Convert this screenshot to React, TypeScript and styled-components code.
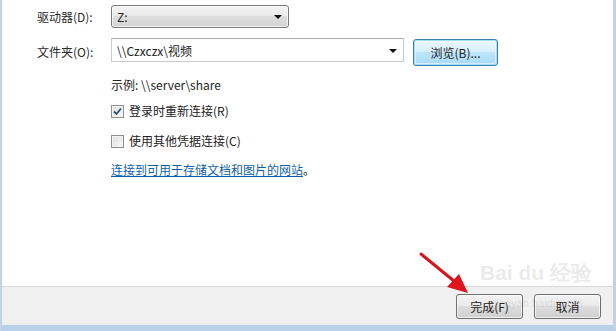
import React from "react";
import styled, { createGlobalStyle } from "styled-components";

const Global = createGlobalStyle`
  html, body { margin: 0; padding: 0; background: #fff; }
  body { font-family: "Noto Sans CJK SC", "Microsoft YaHei", "Noto Sans", sans-serif; }
`;

const Window = styled.div`
  position: relative;
  width: 616px;
  height: 331px;
  box-sizing: border-box;
  display: flex;
  flex-direction: column;
  border-left: 2px solid #c3d3e4;
  border-right: 3px solid #c2d2e2;
  overflow: hidden;
  font-size: 12px;
  color: #222;
`;

const Content = styled.div`
  flex: 1;
  background: #fff;
  padding: 5px 0 0 35px;
  display: flex;
  flex-direction: column;
`;

const Row = styled.div<{ $mt?: number; $top?: boolean }>`
  display: flex;
  align-items: ${(p) => (p.$top ? "flex-start" : "center")};
  margin-top: ${(p) => p.$mt ?? 0}px;
`;

const Label = styled.div<{ $lh?: number }>`
  width: 74px;
  line-height: ${(p) => p.$lh ?? 16}px;
  color: #2a2a2a;
`;

const Select = styled.div`
  box-sizing: border-box;
  width: 178px;
  height: 23px;
  border: 1px solid #7a7a7a;
  border-radius: 3px;
  background: linear-gradient(#f4f4f4 0%, #ebebeb 45%, #dddddd 50%, #d4d4d4 100%);
  display: flex;
  align-items: center;
  justify-content: space-between;
  padding: 0 6px 0 5px;
  box-shadow: inset 0 0 0 1px rgba(255,255,255,0.7);
`;

const Combo = styled.div`
  box-sizing: border-box;
  width: 293px;
  height: 24px;
  border: 1px solid #c8cbd0;
  border-top-color: #a9acb1;
  background: #fff;
  display: flex;
  align-items: center;
  justify-content: space-between;
  padding: 0 6px 0 5px;
`;

const Arrow = styled.span`
  width: 0;
  height: 0;
  border-left: 4px solid transparent;
  border-right: 4px solid transparent;
  border-top: 4px solid #111;
  margin-top: 1px;
`;

const BrowseButton = styled.div`
  box-sizing: border-box;
  margin-left: 9px;
  margin-top: 1px;
  width: 85px;
  height: 27px;
  border: 1px solid #3c7fb1;
  border-radius: 3px;
  background: linear-gradient(#eaf6fd 0%, #d9f0fc 45%, #bee6fd 50%, #a7d9f5 100%);
  box-shadow: inset 0 0 0 1px #9ee0f5, inset 0 0 0 2px rgba(255,255,255,0.5);
  display: flex;
  align-items: center;
  justify-content: center;
  color: #222;
`;

const Indented = styled.div<{ $mt: number }>`
  margin-left: 74px;
  margin-top: ${(p) => p.$mt}px;
  line-height: 16px;
  display: flex;
  align-items: center;
`;

const Box = styled.span`
  box-sizing: border-box;
  width: 13px;
  height: 13px;
  border: 1px solid #8e8f8f;
  background: linear-gradient(135deg, #dcdcdc, #fbfbfb);
  box-shadow: inset 0 0 0 1px #f4f4f4;
  margin-right: 5px;
  display: flex;
  align-items: center;
  justify-content: center;
`;

const Link = styled.span`
  color: #0f5fa8;
  text-decoration: underline;
`;

const Footer = styled.div`
  height: 39px;
  box-sizing: border-box;
  background: #f0f0f0;
  border-top: 1px solid #d8d8d8;
  border-bottom: 1px solid #e8eef5;
  display: flex;
  align-items: flex-start;
  justify-content: flex-end;
  gap: 11px;
  padding: 7px 12px 0 0;
`;

const Button = styled.div`
  box-sizing: border-box;
  width: 67px;
  height: 25px;
  border: 1px solid #707070;
  border-radius: 3px;
  background: linear-gradient(#f2f2f2 0%, #ebebeb 45%, #dddddd 50%, #cfcfcf 100%);
  box-shadow: inset 0 0 0 1px rgba(255,255,255,0.7);
  display: flex;
  align-items: center;
  justify-content: center;
  color: #222;
`;

const BottomBar = styled.div`
  height: 6px;
  background: #bad0e8;
`;

const Watermark = styled.div`
  position: absolute;
  left: 478px;
  top: 262px;
  color: rgba(150, 150, 150, 0.2);
  font-family: "Liberation Sans", Arial, sans-serif;
  font-size: 21px;
  font-weight: bold;
  line-height: 22px;
  pointer-events: none;
  white-space: nowrap;
`;

const WatermarkSub = styled.div`
  position: absolute;
  left: 492px;
  top: 297px;
  color: rgba(150, 150, 150, 0.22);
  font-family: "Liberation Sans", Arial, sans-serif;
  font-size: 11px;
  pointer-events: none;
`;

const RedArrow = styled.svg`
  position: absolute;
  left: 408px;
  top: 243px;
  pointer-events: none;
`;

export default function App() {
  return (
    <>
      <Global />
      <Window>
        <Content>
          <Row>
            <Label>驱动器(D):</Label>
            <Select>
              <span>Z:</span>
              <Arrow />
            </Select>
          </Row>
          <Row $mt={10} $top>
            <Label $lh={27}>文件夹(O):</Label>
            <Combo>
              <span>\\Czxczx\视频</span>
              <Arrow />
            </Combo>
            <BrowseButton>浏览(B)...</BrowseButton>
          </Row>
          <Indented $mt={11}>示例: \\server\share</Indented>
          <Indented $mt={10}>
            <Box>
              <svg width="9" height="9" viewBox="0 0 9 9">
                <path d="M1 4.5 L3.5 7 L8 1.5" fill="none" stroke="#2c4f7c" strokeWidth="1.8" />
              </svg>
            </Box>
            登录时重新连接(R)
          </Indented>
          <Indented $mt={14}>
            <Box />
            使用其他凭据连接(C)
          </Indented>
          <Indented $mt={13}>
            <Link>连接到可用于存储文档和图片的网站</Link>。
          </Indented>
        </Content>
        <Footer>
          <Button>完成(F)</Button>
          <Button>取消</Button>
        </Footer>
        <BottomBar />
        <Watermark>Bai du 经验</Watermark>
        <WatermarkSub>jingyan.baidu.com</WatermarkSub>
        <RedArrow width="70" height="60" viewBox="0 0 70 60">
          <line x1="11" y1="11" x2="44" y2="38" stroke="#d8141a" strokeWidth="3" strokeLinecap="round" />
          <polygon points="58,50 37,44 49,31" fill="#e0141a" />
        </RedArrow>
      </Window>
    </>
  );
}
